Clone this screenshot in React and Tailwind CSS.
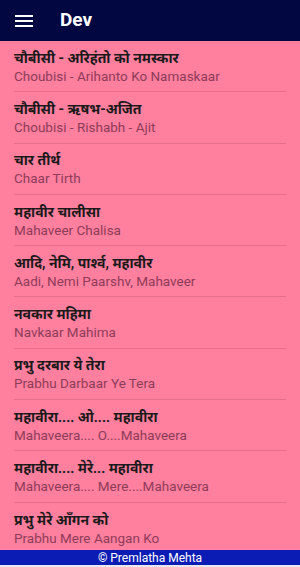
import React from 'react';

const songs = [
  { hi: 'चौबीसी - अरिहंतो को नमस्कार', en: 'Choubisi - Arihanto Ko Namaskaar' },
  { hi: 'चौबीसी - ऋषभ-अजित', en: 'Choubisi - Rishabh - Ajit' },
  { hi: 'चार तीर्थ', en: 'Chaar Tirth' },
  { hi: 'महावीर चालीसा', en: 'Mahaveer Chalisa' },
  { hi: 'आदि, नेमि, पार्श्व, महावीर', en: 'Aadi, Nemi Paarshv, Mahaveer' },
  { hi: 'नवकार महिमा', en: 'Navkaar Mahima' },
  { hi: 'प्रभु दरबार ये तेरा', en: 'Prabhu Darbaar Ye Tera' },
  { hi: 'महावीरा.... ओ.... महावीरा', en: 'Mahaveera.... O....Mahaveera' },
  { hi: 'महावीरा.... मेरे... महावीरा', en: 'Mahaveera.... Mere....Mahaveera' },
  { hi: 'प्रभु मेरे आँगन को', en: 'Prabhu Mere Aangan Ko' },
];

export default function App() {
  return (
    <div className="w-[300px] h-[567px] flex flex-col bg-[#ff7f9f] overflow-hidden"
      style={{ fontFamily: 'Roboto, "Noto Sans", "Noto Sans Devanagari", sans-serif' }}>
      {/* header */}
      <div className="h-[41px] bg-[#020742] flex items-center px-[15px] shrink-0">
        <svg width="18" height="14" viewBox="0 0 18 14" className="text-white">
          <rect x="0" y="1" width="18" height="2" fill="currentColor" />
          <rect x="0" y="6" width="18" height="2" fill="currentColor" />
          <rect x="0" y="11" width="18" height="2" fill="currentColor" />
        </svg>
        <span className="ml-[27px] text-white text-[19px] font-bold">Dev</span>
      </div>

      {/* list */}
      <div className="flex-1 overflow-hidden px-[14px]">
        {songs.map((s, i) => (
          <div key={i}
            className={`h-[51.3px] flex flex-col justify-center pt-[1px] ${i < songs.length - 1 ? 'border-b border-[#e66f8d]' : ''}`}>
            <div className="text-[14px] font-bold text-[#1a1a1a] leading-[19px]">{s.hi}</div>
            <div className="text-[13.5px] text-[#8f3c58] leading-[17px]">{s.en}</div>
          </div>
        ))}
      </div>

      {/* footer */}
      <div className="h-[15px] bg-[#0b1cb4] flex items-center justify-center shrink-0">
        <span className="text-white text-[12px] leading-none">© Premlatha Mehta</span>
      </div>
      <div className="h-[2px] bg-[#e8e8f0] shrink-0" />
    </div>
  );
}
